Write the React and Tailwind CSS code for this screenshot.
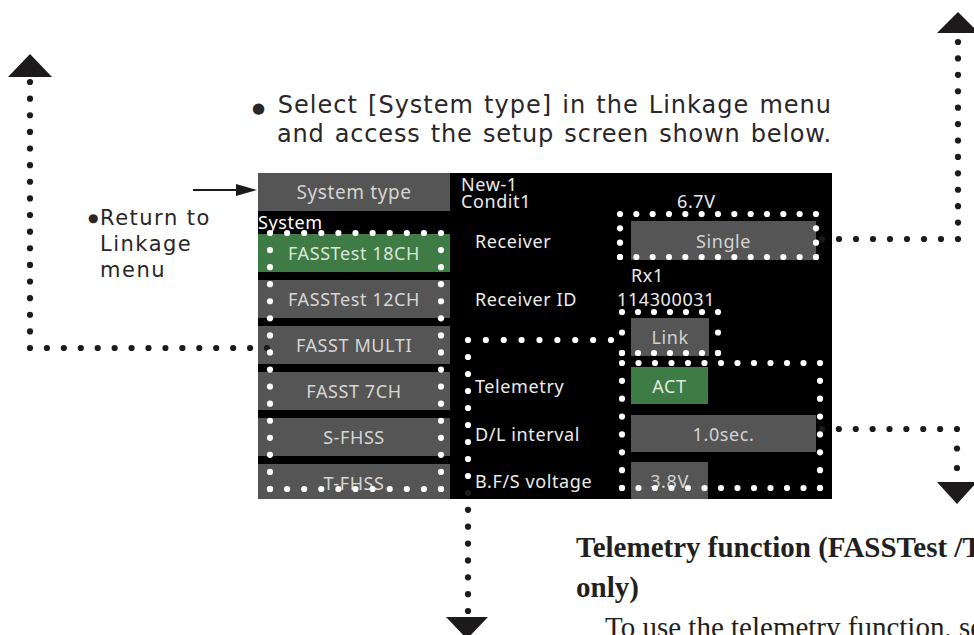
import React from "react";

function dotsLine(x1, y1, x2, y2, step = 17, skipFirst = false) {
  const len = Math.hypot(x2 - x1, y2 - y1);
  const n = Math.max(1, Math.round(len / step));
  const pts = [];
  for (let i = skipFirst ? 1 : 0; i <= n; i++) {
    pts.push([x1 + ((x2 - x1) * i) / n, y1 + ((y2 - y1) * i) / n]);
  }
  return pts;
}

function rectDots(x1, y1, x2, y2) {
  return [
    ...dotsLine(x1, y1, x2, y1),
    ...dotsLine(x1, y2, x2, y2),
    ...dotsLine(x1, y1, x1, y2, 17, true),
    ...dotsLine(x2, y1, x2, y2, 17, true),
  ];
}

const blackDots = [
  ...dotsLine(30, 82, 30, 348),
  ...dotsLine(30, 348, 267, 348, 17, true),
  ...dotsLine(822, 239, 958, 239),
  ...dotsLine(958, 239, 958, 42, 17, true),
  ...dotsLine(822, 429, 957, 429),
  ...dotsLine(957, 429, 957, 468, 17, true),
  ...dotsLine(468, 493, 468, 611),
];

const whiteDots = [
  ...rectDots(270, 233, 441, 489),
  ...rectDots(620, 214, 816, 257),
  ...rectDots(622, 312, 718, 353),
  ...dotsLine(611, 340, 468, 340),
  ...dotsLine(468, 340, 468, 476, 17, true),
  ...rectDots(622, 363, 820, 488),
];

function Overlay() {
  return (
    <svg
      className="absolute inset-0 pointer-events-none"
      width="974"
      height="635"
      viewBox="0 0 974 635"
    >
      {blackDots.map(([x, y], i) => (
        <circle key={"b" + i} cx={x} cy={y} r="3.1" fill="#1c1a1b" />
      ))}
      {whiteDots.map(([x, y], i) => (
        <circle key={"w" + i} cx={x} cy={y} r="3.1" fill="#ffffff" />
      ))}
      <polygon points="30,54 8,77 52,77" fill="#1c1a1b" />
      <polygon points="958,12 937,33 979,33" fill="#1c1a1b" />
      <polygon points="937,482 977,482 957,504" fill="#1c1a1b" />
      <polygon points="446,617 488,617 467,639" fill="#1c1a1b" />
      <line x1="193" y1="190" x2="240" y2="190" stroke="#1c1a1b" strokeWidth="2" />
      <polygon points="236,184 257,190 236,196" fill="#1c1a1b" />
    </svg>
  );
}

function Btn({ children, green }) {
  return (
    <div
      className={
        "h-[38px] shrink-0 flex items-center justify-center " +
        (green ? "bg-[#3f7b45] text-[#d8e6d8]" : "bg-[#555555] text-[#d6d6d6]")
      }
    >
      {children}
    </div>
  );
}

function Row({ label, children, className }) {
  return (
    <div className={"flex items-center shrink-0 " + className}>
      <span className="w-[181px] shrink-0 pl-[25px] text-[#ececec]">{label}</span>
      {children}
    </div>
  );
}

function Box({ children, w, green }) {
  return (
    <div
      className={
        "h-full flex items-center justify-center " +
        w +
        (green ? " bg-[#3f7b45] text-[#dfeadf]" : " bg-[#555555] text-[#d2d2d2]")
      }
    >
      {children}
    </div>
  );
}

function Screen() {
  return (
    <div className="flex w-[574px] h-[326px] shrink-0 bg-black overflow-hidden font-['Noto_Sans',sans-serif] text-[18px] tracking-[0.6px] leading-[22px]">
      <div className="w-[192px] shrink-0 flex flex-col">
        <div className="h-[38px] shrink-0 bg-[#555555] flex items-center justify-center text-[#d4d4d4] text-[19px]">
          System type
        </div>
        <div className="h-[23px] shrink-0 leading-[23px] text-white">System</div>
        <div className="flex flex-col gap-[8px]">
          <Btn green>FASSTest 18CH</Btn>
          <Btn>FASSTest 12CH</Btn>
          <Btn>FASST MULTI</Btn>
          <Btn>FASST 7CH</Btn>
          <Btn>S-FHSS</Btn>
          <Btn>T-FHSS</Btn>
        </div>
      </div>
      <div className="flex-1 flex flex-col">
        <div className="pl-[11px] pt-[3px] leading-[17px] text-[#ececec]">
          <div>New-1</div>
          <div className="flex">
            <span className="w-[216px] shrink-0">Condit1</span>
            <span>6.7V</span>
          </div>
        </div>
        <Row label="Receiver" className="mt-[11px] h-[39px]">
          <Box w="w-[185px]">Single</Box>
        </Row>
        <div className="h-[24px] shrink-0 flex items-end pl-[181px] leading-[17px] text-[#ececec]">
          Rx1
        </div>
        <Row label="Receiver ID" className="h-[30px]">
          <span className="ml-[-14px] text-[#ececec]">114300031</span>
        </Row>
        <Row label="" className="mt-[4px] h-[38px]">
          <Box w="w-[78px]">Link</Box>
        </Row>
        <Row label="Telemetry" className="mt-[11px] h-[37px]">
          <Box w="w-[77px]" green>ACT</Box>
        </Row>
        <Row label="D/L interval" className="mt-[11px] h-[37px]">
          <Box w="w-[185px]">1.0sec.</Box>
        </Row>
        <Row label="B.F/S voltage" className="mt-[10px] h-[37px]">
          <Box w="w-[77px]">3.8V</Box>
        </Row>
      </div>
    </div>
  );
}

export default function App() {
  return (
    <div className="relative w-[974px] h-[635px] overflow-hidden bg-white">
      <div className="flex flex-col">
        <div className="mt-[92px] ml-[252px] font-['DejaVu_Sans',sans-serif] text-[24px] leading-[26px] text-[#2a2627]">
          <div className="w-[580px] [text-align-last:justify] tracking-[1px]">
            <span className="text-[15px]">●</span> Select [System type] in the Linkage menu
          </div>
          <div className="ml-[25px] w-[555px] [text-align-last:justify] tracking-[0.8px]">
            and access the setup screen shown below.
          </div>
        </div>
        <div className="mt-[26px] flex">
          <div className="w-[258px] shrink-0 pt-[32px] pl-[88px] flex font-['DejaVu_Sans',sans-serif] text-[21px] leading-[26px] tracking-[1.5px] text-[#2a2627]">
            <span className="text-[12px] w-[12px] shrink-0 tracking-normal">●</span>
            <div>
              Return to
              <br />
              Linkage
              <br />
              menu
            </div>
          </div>
          <Screen />
        </div>
        <div className="mt-[28px] ml-[576px] w-[520px] font-['Liberation_Serif',serif] text-[29px] leading-[40px] text-[#231f20]">
          <div className="font-bold">Telemetry function (FASSTest /T-FHSS only)</div>
          <div className="pl-[29px] whitespace-nowrap">
            To use the telemetry function, set the telemetry to ACT.
          </div>
        </div>
      </div>
      <Overlay />
    </div>
  );
}
